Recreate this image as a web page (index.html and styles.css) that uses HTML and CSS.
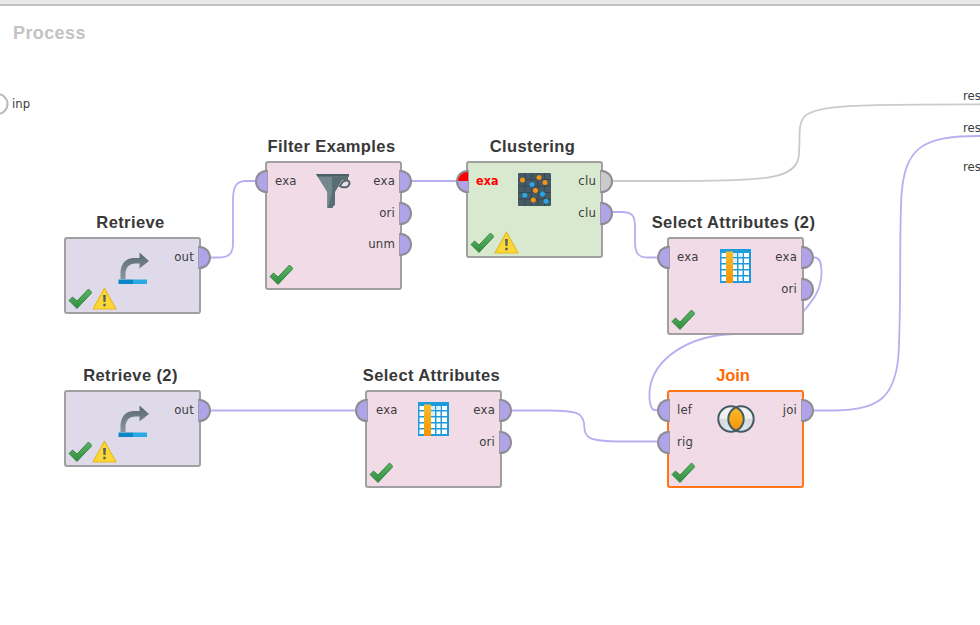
FILE: index.html
```
<!DOCTYPE html>
<html lang="en">
<head>
<meta charset="utf-8">
<title>Process</title>
<link rel="stylesheet" href="styles.css">
</head>
<body>
<svg class="defs" aria-hidden="true">
  <defs>
    <linearGradient id="steel" x1="0" y1="0" x2="0" y2="1"><stop offset="0" stop-color="#596970"/><stop offset="1" stop-color="#89979d"/></linearGradient>
    <linearGradient id="green" x1="0" y1="0" x2="0" y2="1"><stop offset="0" stop-color="#58b465"/><stop offset=".5" stop-color="#48a454"/><stop offset="1" stop-color="#2c8b3a"/></linearGradient>
    <linearGradient id="amber" x1="0" y1="0" x2="0" y2="1"><stop offset="0" stop-color="#f6bc2c"/><stop offset="1" stop-color="#f79400"/></linearGradient>
    <linearGradient id="silver" x1="0" y1="0" x2="0" y2="1"><stop offset="0" stop-color="#f3f5f5"/><stop offset=".5" stop-color="#eceff0"/><stop offset=".5" stop-color="#d5dcde"/><stop offset="1" stop-color="#dfe5e6"/></linearGradient>
    <symbol id="check" viewBox="0 0 24 22"><path d="M1 12.5 4.5 9 9 13 20.5 1 24 4.5 9 20.5Z" fill="url(#green)" stroke="#317d3c" stroke-width=".9"/></symbol>
    <symbol id="warn" viewBox="0 0 25 23"><path d="M12.5 1.2 24 22H1Z" fill="#fdd835" stroke="#e8b923" stroke-width="1.2" stroke-linejoin="round"/><path d="M11.1 8h2.8l-.4 7h-2zM11.3 16.8h2.4v2.4h-2.4z" fill="#51606a"/></symbol>
    <symbol id="retrieve" viewBox="0 0 32 32"><path d="M3.500 27V20Q4.500 6.500 17 6H22.500V.5L32 9 22.500 16.500V11.500H18Q9.500 12 8.500 20V27Z" fill="url(#steel)"/><path d="M1.500 27.500H16V32H1.500Z" fill="#0b86c8"/><path d="M16 27.500H30V32H16Z" fill="#2aaae2"/></symbol>
    <symbol id="filter" viewBox="0 0 36 36"><path d="M1 1H34V4H18V35H12.500V19.500Z" fill="#70838b"/><path d="M17 4H29L20 19V32L16 35 12.500 35V19.500H17Z" fill="#596d75"/><path d="M1 1H34V3.500H2.500Z" fill="#4c6068"/><path d="M3 4H17V20L13 35V19Z" fill="#75878e"/><path d="M25 4H33V7H26Z" fill="#596d75"/><path d="M28 8.500Q34.500 6 34.500 10.500 33.500 15.500 27 14L25 13Z" fill="#f1dbe7" stroke="#52656d" stroke-width="2"/></symbol>
    <symbol id="cluster" viewBox="0 0 33 33"><rect width="33" height="33" rx="1" fill="#455a64"/><path d="M7 0V33M13.500 0V33M20 0V33M26.500 0V33M0 6.500H33M0 13H33M0 19.500H33M0 26H33" stroke="#344953"/><g fill="#f79414"><circle cx="4.500" cy="7" r="2.500"/><circle cx="21" cy="4.500" r="2.500"/><circle cx="27" cy="9.500" r="2.500"/><circle cx="17.500" cy="17.500" r="2.500"/><circle cx="15.300" cy="27" r="2.500"/></g><g fill="#2aa5e5"><circle cx="14" cy="11.500" r="2.500"/><circle cx="24.500" cy="21" r="2.500"/><circle cx="6.800" cy="22.200" r="2.500"/><circle cx="28" cy="28.300" r="2.500"/></g></symbol>
    <symbol id="table" viewBox="0 0 31 34"><path d="M0 0H31V34H0Z" fill="#1d9bdb"/><g fill="#fff"><path d="M1.500 4H6V8H1.500zM1.500 9.500H6V14H1.500zM1.500 15.500H6V20H1.500zM1.500 21.500H6V26H1.500zM1.500 27.500H6V32H1.500z"/><path d="M13 4H17V8H13zM18.500 4H22.500V8H18.500zM24 4H29V8H24zM13 9.500H17V14H13zM18.500 9.500H22.500V14H18.500zM24 9.500H29V14H24zM13 15.500H17V20H13zM18.500 15.500H22.500V20H18.500zM24 15.500H29V20H24zM13 21.500H17V26H13zM18.500 21.500H22.500V26H18.500zM24 21.500H29V26H24zM13 27.500H17V32H13zM18.500 27.500H22.500V32H18.500zM24 27.500H29V32H24z"/></g><path d="M13 4H17V8H13zM18.500 4H22.500V8H18.500zM13 9.500H17V14H13z" fill="#d9effa"/><path d="M6 2.500H13V34H6Z" fill="url(#amber)"/></symbol>
    <symbol id="join" viewBox="0 0 38 28"><circle cx="14" cy="14" r="12.700" fill="url(#silver)"/><circle cx="24" cy="14" r="12.700" fill="url(#silver)"/><path d="M19 2.300A12.700 12.700 0 0 1 19 25.700A12.700 12.700 0 0 1 19 2.300Z" fill="url(#amber)"/><g fill="none" stroke="#455a64" stroke-width="2"><circle cx="14" cy="14" r="12.700"/><circle cx="24" cy="14" r="12.700"/></g></symbol>
  </defs>
</svg>
<div class="toolbar-edge"></div>
<main class="canvas">
  <h1 class="process-title">Process</h1>
  <svg class="wires" viewBox="0 0 980 625">
    <circle class="source" cx="-2.500" cy="104" r="10"/>
    <path class="gray" d="M612 181H680C755 180.500 794 181 798.500 158C801 138 797 126 804 117C815 104 868 104.300 980 104.300"/>
    <path d="M211 257.500H218C229 257.500 233 254 233 243V200C233 187 236 181 246 181H255"/>
    <path d="M411 181H456"/>
    <path d="M612 212H621C633 212 635 216 635 227V242C635 254 639 257.500 648 257.500H657"/>
    <path d="M813 257.500H815C820 258 821.500 263 821.500 273C821 290 814 299 803 312"/>
    <path d="M735 334C690 335 652 358 649.500 392C649 403 651 410 655 410H657"/>
    <path d="M211 410.500H356"/>
    <path d="M512 410.500H548C578 411 582 413 584 423C585 436 583 441.500 622 441.500H657"/>
    <path d="M813 410.500H835C877 410 895 399 898.500 355C901.500 300 899 240 901.500 195C905 146 924 136 980 136"/>
  </svg>
  <span class="end-label inp">inp</span>
  <span class="end-label res1">res</span>
  <span class="end-label res2">res</span>
  <span class="end-label res3">res</span>

  <section class="node data retrieve1">
    <h2>Retrieve</h2>
    <div class="ports in"></div>
    <svg class="icon i-retrieve"><use href="#retrieve"/></svg>
    <div class="ports out"><span class="port">out</span></div>
    <div class="status"><svg class="check"><use href="#check"/></svg><svg class="warn"><use href="#warn"/></svg></div>
  </section>
  <section class="node blend filter1">
    <h2>Filter Examples</h2>
    <div class="ports in"><span class="port">exa</span></div>
    <svg class="icon i-filter"><use href="#filter"/></svg>
    <div class="ports out"><span class="port">exa</span><span class="port">ori</span><span class="port">unm</span></div>
    <div class="status"><svg class="check"><use href="#check"/></svg></div>
  </section>
  <section class="node model cluster1">
    <h2>Clustering</h2>
    <div class="ports in"><span class="port error">exa</span></div>
    <svg class="icon i-cluster"><use href="#cluster"/></svg>
    <div class="ports out"><span class="port neutral">clu</span><span class="port">clu</span></div>
    <div class="status"><svg class="check"><use href="#check"/></svg><svg class="warn"><use href="#warn"/></svg></div>
  </section>
  <section class="node blend select2">
    <h2>Select Attributes (2)</h2>
    <div class="ports in"><span class="port">exa</span></div>
    <svg class="icon i-table"><use href="#table"/></svg>
    <div class="ports out"><span class="port">exa</span><span class="port">ori</span></div>
    <div class="status"><svg class="check"><use href="#check"/></svg></div>
  </section>
  <section class="node data retrieve2">
    <h2>Retrieve (2)</h2>
    <div class="ports in"></div>
    <svg class="icon i-retrieve"><use href="#retrieve"/></svg>
    <div class="ports out"><span class="port">out</span></div>
    <div class="status"><svg class="check"><use href="#check"/></svg><svg class="warn"><use href="#warn"/></svg></div>
  </section>
  <section class="node blend select1">
    <h2>Select Attributes</h2>
    <div class="ports in"><span class="port">exa</span></div>
    <svg class="icon i-table"><use href="#table"/></svg>
    <div class="ports out"><span class="port">exa</span><span class="port">ori</span></div>
    <div class="status"><svg class="check"><use href="#check"/></svg></div>
  </section>
  <section class="node blend selected join1">
    <h2>Join</h2>
    <div class="ports in"><span class="port">lef</span><span class="port">rig</span></div>
    <svg class="icon i-join"><use href="#join"/></svg>
    <div class="ports out"><span class="port">joi</span></div>
    <div class="status"><svg class="check"><use href="#check"/></svg></div>
  </section>
</main>
</body>
</html>
```
FILE: styles.css
```
*, *::after { box-sizing: border-box; }
body { margin: 0; background: #fff; overflow: hidden; }
.defs { position: absolute; width: 0; height: 0; }
.toolbar-edge { height: 6px; background: #e8eae9; border-bottom: 2px solid #c2c2c2; }
.canvas { height: 619px; font: 13px "DejaVu Sans Condensed", "DejaVu Sans", sans-serif; font-stretch: condensed; color: #3c3c3c; }
.process-title { margin: 0; padding: 17px 0 0 13px; font: bold 18px/20px "Liberation Sans", sans-serif; letter-spacing: .4px; color: #c3c3c3; }
.wires { position: absolute; left: 0; top: 0; width: 980px; height: 625px; fill: none; stroke: #b9aef0; stroke-width: 1.8; }
.wires .gray { stroke: #cbcbcb; }
.wires .source { stroke: #bbb; stroke-width: 2; fill: #fff; }
.end-label { position: absolute; line-height: 16px; white-space: nowrap; }
.inp { left: 12px; top: 96px; }
.res1 { left: 963px; top: 88px; }
.res2 { left: 963px; top: 120px; }
.res3 { left: 963px; top: 159px; }

.node { position: absolute; width: 137px; display: grid; grid-template-columns: 1fr 38px 1fr; border: 2px solid #a0a0a0; border-radius: 3px; }
.node h2 { position: absolute; left: -42px; right: -38px; top: -27px; margin: 0; text-align: center; font: bold 16.5px/20px "Liberation Sans", sans-serif; letter-spacing: .4px; color: #383838; white-space: nowrap; }
.data { background: #dfdaea; }
.blend { background: #f1dbe7; }
.model { background: #d9e9cf; }
.selected { border-color: #ff7518; }
.node.selected h2 { color: #ff6900; letter-spacing: -.1px; left: -43px; }
.retrieve1 { left: 64px; top: 237px; height: 77px; }
.filter1 { left: 265px; top: 161px; height: 129px; }
.cluster1 { left: 466px; top: 161px; height: 97px; }
.select2 { left: 667px; top: 237px; height: 98px; }
.retrieve2 { left: 64px; top: 390px; height: 77px; }
.select1 { left: 365px; top: 390px; height: 98px; }
.join1 { left: 667px; top: 390px; height: 98px; }

.ports { display: flex; flex-direction: column; padding-top: 2px; }
.port { position: relative; height: 31.500px; line-height: 31px; letter-spacing: .2px; }
.in .port { padding-left: 8px; }
.out .port { padding-right: 5px; text-align: right; }
.port::after { content: ""; position: absolute; top: 5px; width: 13px; height: 23px; border: 2px solid #8e8c94; background: #b1a3e8; }
.in .port::after { left: -12px; border-right: 1px solid #a09ba8; border-radius: 12px 0 0 12px; }
.out .port::after { right: -12px; border-left: 1px solid #a09ba8; border-radius: 0 12px 12px 0; }
.port.neutral::after { background: #cbcbcb; }
.error { color: #f00; font-weight: bold; font-size: 12.5px; letter-spacing: 0; }
.port.error::after { background: linear-gradient(#f00 50%, #b1a3e8 50%); }
.select1 .in .port { padding-left: 9px; }

.icon { justify-self: center; }
.i-retrieve { width: 32px; height: 32px; margin: 13px 0 0 0; }
.i-filter { width: 36px; height: 36px; margin: 10px 2px 0 0; }
.i-cluster { width: 33px; height: 33px; margin: 10px 0 0 0; }
.i-table { width: 31px; height: 34px; margin: 10px 1px 0 0; }
.i-join { width: 38px; height: 28px; margin-top: 13px; }
.status { grid-column: 1 / -1; position: absolute; left: 2px; bottom: 2px; height: 23px; display: flex; align-items: flex-end; }
.check { width: 24px; height: 22px; }
.warn { width: 25px; height: 23px; }
```
